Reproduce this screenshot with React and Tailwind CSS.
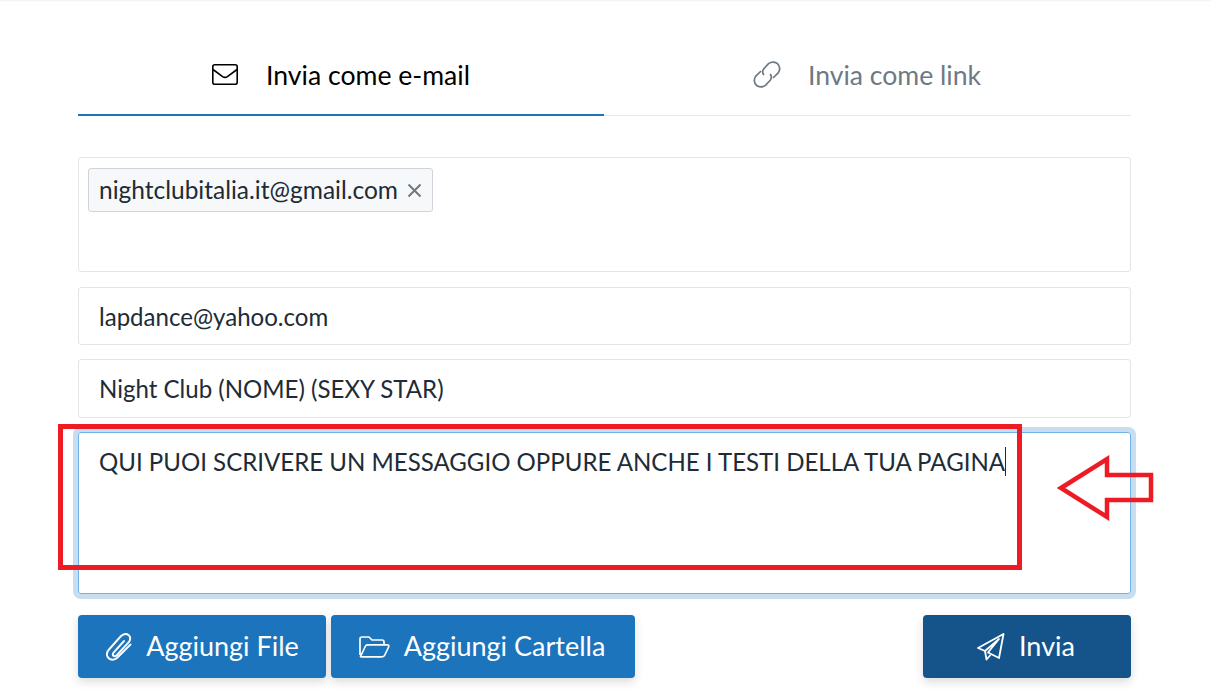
function EnvelopeIcon({ className }) {
  return (
    <svg className={className} viewBox="0 0 26 21" fill="none" stroke="currentColor" strokeWidth="1.6">
      <rect x="0.8" y="0.8" width="24.4" height="19.4" rx="2" />
      <path d="M1 5.5 L10.6 12.6 Q13 14.2 15.4 12.6 L25 5.5" />
    </svg>
  );
}

function LinkIcon({ className }) {
  return (
    <svg className={className} viewBox="0 0 28 27" fill="none" stroke="currentColor" strokeWidth="1.7" strokeLinecap="round">
      <path d="M10.5 13.5 Q8.6 10.5 10.8 7.8 L15.5 2.6 Q19.5 -0.2 24 2.2 Q28.6 6.5 25.4 11.6 L20.5 16.5" />
      <path d="M17.5 13.5 Q19.4 16.5 17.2 19.2 L12.5 24.4 Q8.5 27.2 4 24.8 Q-0.6 20.5 2.6 15.4 L7.5 10.5" />
    </svg>
  );
}

function ClipIcon({ className }) {
  return (
    <svg className={className} viewBox="0 0 26 28" fill="none" stroke="currentColor" strokeWidth="1.9" strokeLinecap="round">
      <path d="M24.5 11.5 L11 25 Q6 28.5 2.5 25 Q-1 21 3 16.5 L15 3 Q19 -0.5 22.5 2 Q26 5 22.5 9.5 L11 22 Q8.8 24 7.3 22.8 Q6 21.5 7.8 19.4 L18 8" />
    </svg>
  );
}

function FolderIcon({ className }) {
  return (
    <svg className={className} viewBox="0 0 31 22" fill="none" stroke="currentColor" strokeWidth="1.7" strokeLinejoin="round">
      <path d="M1 19 V3 Q1 1 3 1 H10 L13 4 H23 Q25 4 25 6 V8.5" />
      <path d="M1.5 20.5 L6.5 10 Q7 8.8 8.5 8.8 H28 Q30.4 8.8 29.6 11 L25.8 19 Q25 20.8 23 20.8 H3 Q1.4 20.8 1.5 20.5 Z" />
    </svg>
  );
}

function PlaneIcon({ className }) {
  return (
    <svg className={className} viewBox="0 0 28 28" fill="none" stroke="currentColor" strokeWidth="1.8" strokeLinejoin="round">
      <path d="M26.5 1 L1 15 L8 18 L22 6 L11 19.5 L22 25 Z" />
      <path d="M8 18 L9.5 26.5 L13.5 22" />
    </svg>
  );
}

function ActionButton({ icon, label, className }) {
  return (
    <button className={`flex h-[63px] items-center justify-center rounded-[4px] text-[27px] text-white shadow-[0_4px_10px_rgba(0,0,0,0.14)] ${className}`}>
      {icon}
      {label}
    </button>
  );
}

export default function App() {
  return (
    <div className="relative h-[697px] w-full overflow-hidden bg-white font-['Lato',sans-serif] text-[#212b36]">
      <div className="h-[2px] bg-gradient-to-b from-[#f0f0f0] to-white" />

      <div className="ml-[78px] mr-[80px] pt-[31px]">
        {/* tabs */}
        <div className="flex h-[83px] border-b border-[#e8e8e8]">
          <div className="mb-[-1px] flex w-[526px] items-center justify-center border-b-2 border-[#1c74bd] pt-[4px] text-[26.6px] text-black">
            <EnvelopeIcon className="mr-[28px] mt-[-3px] h-[21px] w-[26px]" />
            Invia come e-mail
          </div>
          <div className="flex flex-1 items-center justify-center pr-[1px] pt-[3px] text-[26.6px] text-[#6c7a86]">
            <LinkIcon className="mr-[27px] mt-[-3px] h-[27px] w-[28px]" />
            Invia come link
          </div>
        </div>

        {/* fields */}
        <div className="mt-[41px] h-[115px] rounded-[3px] border border-[#e4e4e4] py-[10px] pl-[9px]">
          <div className="inline-flex h-[44px] items-center rounded-[3px] border border-[#d0d4da] bg-[#f6f8fa] pl-[10px] pr-[10px] text-[24.5px]">
            nightclubitalia.it@gmail.com
            <svg className="ml-[9px] h-[15px] w-[15px] text-[#6c7a86]" viewBox="0 0 15 15" fill="none" stroke="currentColor" strokeWidth="2">
              <path d="M1.5 1.5 L13.5 13.5 M13.5 1.5 L1.5 13.5" />
            </svg>
          </div>
        </div>
        <div className="mt-[15px] flex h-[58px] items-center rounded-[3px] border border-[#e4e4e4] pl-[20px] pt-[2px] text-[24.05px]">
          lapdance@yahoo.com
        </div>
        <div className="mt-[14px] flex h-[59px] items-center rounded-[3px] border border-[#e4e4e4] pl-[20px] pt-[2px] text-[24.05px]">
          Night Club (NOME) (SEXY STAR)
        </div>
        <div className="mt-[14px] h-[162px] rounded-[3px] border border-[#6fb1e8] pl-[20px] pt-[13px] text-[24.05px] leading-[32px] shadow-[0_0_0_5px_#c8ddf0]">
          <span className="border-r border-[#212b36]">QUI PUOI SCRIVERE UN MESSAGGIO OPPURE ANCHE I TESTI DELLA TUA PAGINA</span>
        </div>

        {/* buttons */}
        <div className="mt-[21px] flex gap-[5px]">
          <ActionButton
            className="w-[248px] bg-[#1c74bd] pl-[1px]"
            label="Aggiungi File"
            icon={<ClipIcon className="mr-[14px] h-[28px] w-[26px]" />}
          />
          <ActionButton
            className="w-[304px] bg-[#1c74bd] pr-[2px]"
            label="Aggiungi Cartella"
            icon={<FolderIcon className="mr-[14px] h-[22px] w-[31px]" />}
          />
          <ActionButton
            className="ml-auto w-[208px] bg-[#15548a] pr-[2px]"
            label="Invia"
            icon={<PlaneIcon className="mr-[14px] h-[28px] w-[28px]" />}
          />
        </div>
      </div>

      {/* red annotation over the screenshot */}
      <div className="absolute left-[58px] top-[424px] h-[146px] w-[964px] border-[5px] border-[#ed1c24]" />
      <svg className="absolute left-[1050px] top-[450px] h-[76px] w-[110px]" viewBox="0 0 110 76" fill="none" stroke="#ed1c24" strokeWidth="4.5">
        <path d="M11 38 L57 9 V25 H101 V50 H57 V67 Z" />
      </svg>
    </div>
  );
}
